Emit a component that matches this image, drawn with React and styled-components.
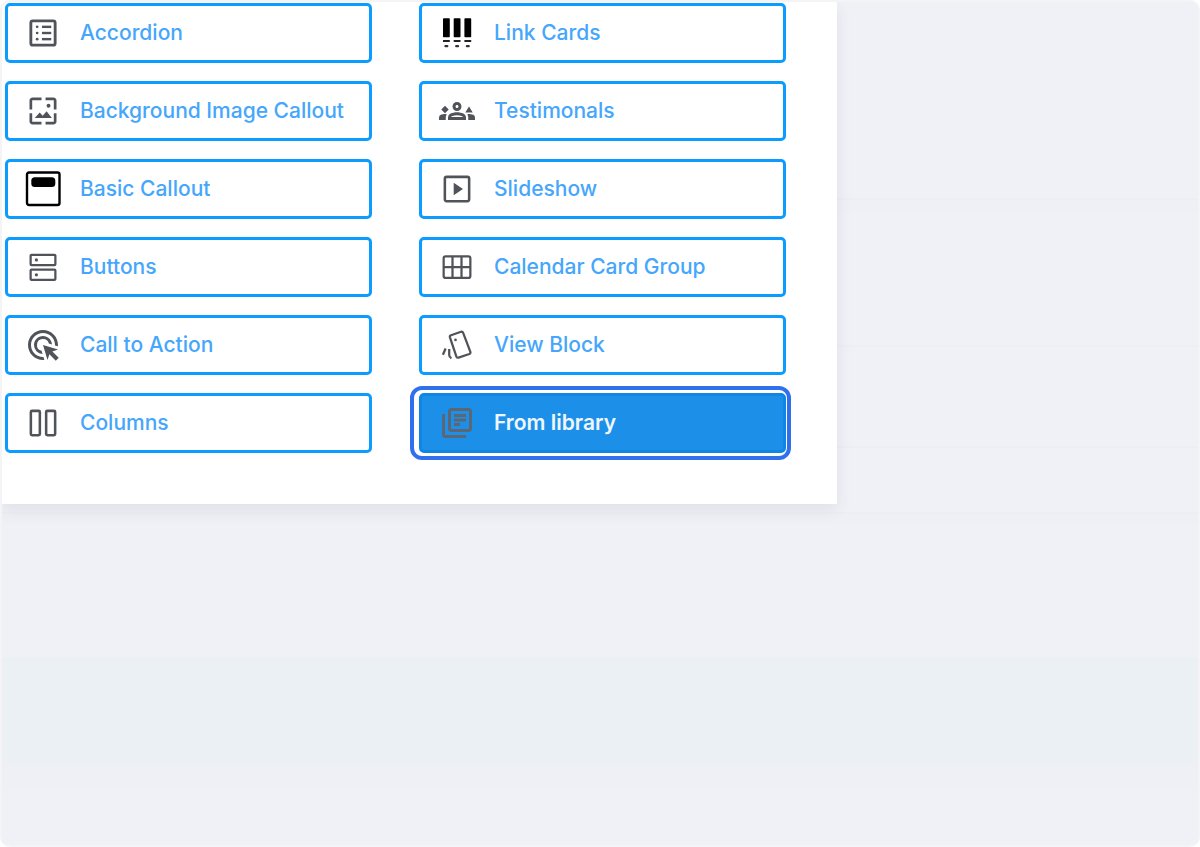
import React, { useState } from 'react';
import styled, { createGlobalStyle } from 'styled-components';
import { MdAdsClick, MdOutlineGroups3, MdOutlineLibraryBooks } from 'react-icons/md';

const GlobalStyle = createGlobalStyle`
  * {
    box-sizing: border-box;
  }

  body {
    margin: 0;
    background: #ffffff;
    font-family: Inter, "Liberation Sans", sans-serif;
  }
`;

const Page = styled.main`
  display: grid;
  min-height: 100vh;
  border: 2px solid #f4f4f7;
  border-radius: 10px;
  background: #f0f1f6;
  overflow: hidden;
`;

// Backdrop and panel share the same grid cell, the panel is on top
const Backdrop = styled.div`
  grid-area: 1 / 1;
  display: flex;
  flex-direction: column;
`;

const tones = {
  plain: '#f0f1f6',
  shade: '#eff0f5',
  tint: '#eaf0f4',
};

const Band = styled.div`
  flex: ${({ $size }) => ($size ? `0 0 ${$size}px` : '1')};
  background: ${({ $tone }) => tones[$tone]};
  border-top: ${({ $line }) => ($line ? '2px solid #edeef3' : 'none')};
`;

const Panel = styled.section`
  grid-area: 1 / 1;
  align-self: start;
  z-index: 1;
  display: grid;
  grid-template-columns: repeat(2, minmax(0, 1fr));
  gap: 18px 47px;
  width: 100%;
  max-width: 835px;
  padding: 1px 51px 51px 3px;
  background: #ffffff;
  box-shadow: 0 6px 14px rgba(50, 65, 110, 0.09);
`;

const Column = styled.div`
  display: flex;
  flex-direction: column;
  gap: 18px;
`;

const BlockButton = styled.button`
  position: relative;
  display: flex;
  align-items: center;
  gap: 19px;
  width: 100%;
  height: 60px;
  padding: 0 17px;
  border: 3px solid ${({ $active }) => ($active ? '#0d87e3' : '#0c9cff')};
  border-radius: 5px;
  background: ${({ $active }) => ($active ? '#1c90e8' : '#ffffff')};
  color: ${({ $active }) => ($active ? '#eef6ff' : '#45a6fc')};
  font-family: inherit;
  font-size: 21px;
  font-weight: ${({ $active }) => ($active ? 600 : 500)};
  line-height: 28px;
  text-align: left;
  white-space: nowrap;
  cursor: pointer;

  svg {
    flex: none;
    width: 36px;
    height: 36px;
    color: ${({ $active }) => ($active ? '#5d6673' : '#50545a')};
  }

  &:focus {
    outline: none;
  }

  &::after {
    content: '';
    display: ${({ $active }) => ($active ? 'block' : 'none')};
    position: absolute;
    inset: -10px -8px -10px -12px;
    border: 4px solid #3170ec;
    border-radius: 12px;
    pointer-events: none;
  }
`;

const AccordionIcon = () => (
  <svg viewBox="0 0 24 24" fill="currentColor" aria-hidden="true">
    <rect x="3.9" y="3.900" width="16.200" height="16.200" rx="1.300" fill="none" stroke="currentColor" strokeWidth="1.900" />
    {[7.9, 12, 16.1].map((y) => (
      <g key={y}>
        <circle cx="8.100" cy={y} r="0.900" />
        <rect x="11.300" y={y - 0.8} width="6.200" height="1.600" />
      </g>
    ))}
  </svg>
);

const BackgroundIcon = () => (
  <svg viewBox="0 0 24 24" fill="currentColor" aria-hidden="true">
    <path d="M11 3H5c-1.1 0-2 .9-2 2v6h1.800V4.800H11zM13.700 3v1.800h5.500V11H21V5c0-1.100-.9-2-2-2zM19.200 13.500v5.700h-5.500V21H19c1.100 0 2-.9 2-2v-5.500zM4.800 13.500H3V19c0 1.100.9 2 2 2h6v-1.800H4.800z" />
    <path d="M6.500 16.700l3.300-3.700 2 2.100 2.600-3 3.500 4.600z" />
    <circle cx="15.700" cy="8.500" r="1.300" />
  </svg>
);

const CalloutIcon = () => (
  <svg viewBox="0 0 36 36" aria-hidden="true">
    <rect x="2" y="1.500" width="32.500" height="32.500" rx="2" fill="none" stroke="#000" strokeWidth="2.400" />
    <rect x="6.300" y="6.300" width="24" height="9.600" rx="3.500" fill="#000" />
  </svg>
);

const ButtonsIcon = () => (
  <svg viewBox="0 0 24 24" fill="none" stroke="currentColor" strokeWidth="1.500" aria-hidden="true">
    <rect x="3.750" y="3.850" width="16.500" height="6.900" rx="0.600" />
    <rect x="3.750" y="13.750" width="16.500" height="6.900" rx="0.600" />
    <circle cx="7.600" cy="7.300" r="1.100" fill="currentColor" stroke="none" />
    <circle cx="7.600" cy="17.200" r="1.100" fill="currentColor" stroke="none" />
  </svg>
);

const ColumnsIcon = () => (
  <svg viewBox="0 0 24 24" fill="none" stroke="currentColor" strokeWidth="1.700" aria-hidden="true">
    <rect x="3.900" y="3.900" width="6" height="16.200" rx="0.800" />
    <rect x="14.100" y="3.900" width="6" height="16.200" rx="0.800" />
  </svg>
);

const LinkCardsIcon = () => (
  <svg viewBox="0 0 36 36" fill="#000" aria-hidden="true">
    {[4, 14.7, 25.4].map((x) => (
      <g key={x}>
        <rect x={x} y="3.300" width="6.800" height="18.900" rx="0.800" />
        <rect x={x} y="25" width="6.800" height="2" fill="#222" />
        <rect x={x + 1.4} y="30" width="4" height="2.200" rx="1" fill="#333" />
      </g>
    ))}
  </svg>
);

const SlideshowIcon = () => (
  <svg viewBox="0 0 24 24" fill="currentColor" aria-hidden="true">
    <rect x="3.900" y="3.900" width="16.200" height="16.200" rx="1.200" fill="none" stroke="currentColor" strokeWidth="1.700" />
    <path d="M9.800 7.800v8.400l6.200-4.200z" />
  </svg>
);

const CalendarIcon = () => (
  <svg viewBox="0 0 24 24" fill="none" stroke="currentColor" strokeWidth="1.500" aria-hidden="true">
    <rect x="3.100" y="4.900" width="17.800" height="14.400" rx="1.300" />
    <path d="M9 4.900v14.400M15 4.900v14.400M3.100 12.100h17.800" />
  </svg>
);

const ViewIcon = () => (
  <svg viewBox="0 0 24 24" fill="none" stroke="currentColor" strokeWidth="1.500" aria-hidden="true">
    <path d="M8 5.500l6.700-2.300q1-.3 1.400.7l4.800 12.700q.3 1-.7 1.400L13 20.400q-1 .3-1.400-.7L7.300 6.900q-.3-1 .7-1.400z" />
    <circle cx="11" cy="8.600" r="0.900" fill="currentColor" stroke="none" />
    <path d="M4.400 14.300l-1.800 4.200M6.800 14.700v4q0 1.400 1.500 2.100" />
  </svg>
);

const leftBlocks = [
  { label: 'Accordion', Icon: AccordionIcon },
  { label: 'Background Image Callout', Icon: BackgroundIcon },
  { label: 'Basic Callout', Icon: CalloutIcon },
  { label: 'Buttons', Icon: ButtonsIcon },
  { label: 'Call to Action', Icon: MdAdsClick },
  { label: 'Columns', Icon: ColumnsIcon },
];

const rightBlocks = [
  { label: 'Link Cards', Icon: LinkCardsIcon },
  { label: 'Testimonals', Icon: MdOutlineGroups3 },
  { label: 'Slideshow', Icon: SlideshowIcon },
  { label: 'Calendar Card Group', Icon: CalendarIcon },
  { label: 'View Block', Icon: ViewIcon },
  { label: 'From library', Icon: MdOutlineLibraryBooks },
];

const bands = [
  { size: 196, tone: 'plain' },
  { size: 14, tone: 'shade', line: true },
  { size: 133, tone: 'plain' },
  { size: 101, tone: 'plain', line: true },
  { size: 66, tone: 'plain', line: true },
  { size: 12, tone: 'shade', line: true },
  { size: 134, tone: 'plain' },
  { size: 104, tone: 'tint' },
  { size: 28, tone: 'shade' },
  { tone: 'plain' },
];

const App = () => {
  const [selected, setSelected] = useState('From library');

  const renderBlock = ({ label, Icon }) => (
    <BlockButton
      key={label}
      type="button"
      $active={selected === label}
      aria-pressed={selected === label}
      onClick={() => setSelected(label)}
    >
      <Icon />
      {label}
    </BlockButton>
  );

  return (
    <>
      <GlobalStyle />
      <Page>
        <Backdrop>
          {bands.map((band, i) => (
            <Band key={i} $size={band.size} $tone={band.tone} $line={band.line} />
          ))}
        </Backdrop>
        <Panel>
          <Column>{leftBlocks.map(renderBlock)}</Column>
          <Column>{rightBlocks.map(renderBlock)}</Column>
        </Panel>
      </Page>
    </>
  );
};

export default App;
